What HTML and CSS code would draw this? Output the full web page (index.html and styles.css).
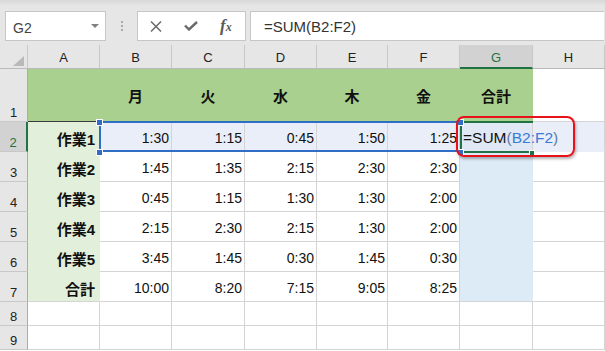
FILE: index.html
```html
<!DOCTYPE html>
<html>
<head>
    <title>合計 - SUM</title>
    <link rel="stylesheet" href="styles.css">
</head>
<body>
    <div class="toolbar">
        <div class="namebox"><span>G2</span><span class="caret"></span></div>
        <div class="grip"><i></i><i></i><i></i></div>
        <div class="tools">
            <svg width="12" height="11" viewBox="0 0 12 11"><path d="M1 0.5L11 10.5M11 0.5L1 10.5" stroke="#6a6a6a" stroke-width="1.5" fill="none"/></svg>
            <svg width="14" height="10" viewBox="0 0 14 10"><path d="M1 4.5L5 8.5L13 1" stroke="#6a6a6a" stroke-width="2.4" fill="none"/></svg>
            <span class="fx">f<small>x</small></span>
        </div>
        <div class="formula">=SUM(B2:F2)</div>
    </div>

    <div class="sheet">
        <!-- column headers -->
        <div class="ch corner"><svg width="11" height="10" viewBox="0 0 11 10"><path d="M11 0V10H0Z" fill="#b9b9b9"/></svg></div>
        <div class="ch">A</div>
        <div class="ch">B</div>
        <div class="ch">C</div>
        <div class="ch">D</div>
        <div class="ch">E</div>
        <div class="ch">F</div>
        <div class="ch on">G</div>
        <div class="ch">H</div>

        <!-- row 1 -->
        <div class="rh">1</div>
        <div class="c g a1"></div>
        <div class="c g">月</div>
        <div class="c g">火</div>
        <div class="c g">水</div>
        <div class="c g">木</div>
        <div class="c g">金</div>
        <div class="c g">合計</div>
        <div class="c"></div>

        <!-- row 2 -->
        <div class="rh on">2</div>
        <div class="c lg">作業1</div>
        <div class="c band">1:30</div>
        <div class="c band">1:15</div>
        <div class="c band">0:45</div>
        <div class="c band">1:50</div>
        <div class="c band">1:25</div>
        <div class="c band edit">=SUM<span class="paren">(</span><span class="ref">B2:F2</span><span class="paren">)</span><span class="caret-line"></span></div>
        <div class="c band"></div>

        <!-- row 3 -->
        <div class="rh">3</div>
        <div class="c lg">作業2</div>
        <div class="c">1:45</div>
        <div class="c">1:35</div>
        <div class="c">2:15</div>
        <div class="c">2:30</div>
        <div class="c">2:30</div>
        <div class="c lb"></div>
        <div class="c"></div>

        <!-- row 4 -->
        <div class="rh">4</div>
        <div class="c lg">作業3</div>
        <div class="c">0:45</div>
        <div class="c">1:15</div>
        <div class="c">1:30</div>
        <div class="c">1:30</div>
        <div class="c">2:00</div>
        <div class="c lb"></div>
        <div class="c"></div>

        <!-- row 5 -->
        <div class="rh">5</div>
        <div class="c lg">作業4</div>
        <div class="c">2:15</div>
        <div class="c">2:30</div>
        <div class="c">2:15</div>
        <div class="c">1:30</div>
        <div class="c">2:00</div>
        <div class="c lb"></div>
        <div class="c"></div>

        <!-- row 6 -->
        <div class="rh">6</div>
        <div class="c lg">作業5</div>
        <div class="c">3:45</div>
        <div class="c">1:45</div>
        <div class="c">0:30</div>
        <div class="c">1:45</div>
        <div class="c">0:30</div>
        <div class="c lb"></div>
        <div class="c"></div>

        <!-- row 7 -->
        <div class="rh">7</div>
        <div class="c lg last">合計</div>
        <div class="c">10:00</div>
        <div class="c">8:20</div>
        <div class="c">7:15</div>
        <div class="c">9:05</div>
        <div class="c">8:25</div>
        <div class="c lb last"></div>
        <div class="c"></div>

        <!-- row 8 -->
        <div class="rh">8</div>
        <div class="c"></div><div class="c"></div><div class="c"></div><div class="c"></div>
        <div class="c"></div><div class="c"></div><div class="c"></div><div class="c"></div>

        <!-- row 9 -->
        <div class="rh">9</div>
        <div class="c"></div><div class="c"></div><div class="c"></div><div class="c"></div>
        <div class="c"></div><div class="c"></div><div class="c"></div><div class="c"></div>

        <!-- selection overlays -->
        <div class="range"></div>
        <div class="active"></div>
        <div class="handle h1"></div>
        <div class="handle h2"></div>
        <div class="handle h3"></div>
        <div class="handle h4"></div>
        <div class="fill"></div>
        <div class="callout"></div>
    </div>
</body>
</html>
```

FILE: styles.css
```css
body {
    margin: 0;
    width: 605px;
    height: 351px;
    overflow: hidden;
    background-color: #ffffff;
    font-family: "Liberation Sans", "Noto Sans CJK JP", sans-serif;
}

/* formula bar */
.toolbar {
    display: flex;
    align-items: flex-start;
    height: 45px;
    box-sizing: border-box;
    padding: 11px 0 0 5px;
    background: linear-gradient(#d8d8d8, #e6e6e6 6px);
}

.namebox {
    width: 101px;
    height: 30px;
    box-sizing: border-box;
    border: 1px solid #c6c6c6;
    background-color: #ffffff;
    display: flex;
    align-items: center;
    justify-content: space-between;
    padding: 4px 6px 0 7px;
    font-size: 14px;
    color: #444444;
}

.caret {
    width: 0;
    height: 0;
    border-left: 4px solid transparent;
    border-right: 4px solid transparent;
    border-top: 4px solid #808080;
    margin-top: -4px;
}

.grip {
    display: flex;
    flex-direction: column;
    gap: 2px;
    margin: 10px 0 0 15px;
}

.grip i {
    display: block;
    width: 2px;
    height: 2px;
    background-color: #a9a9a9;
}

.tools {
    width: 109px;
    height: 30px;
    box-sizing: border-box;
    margin-left: 14px;
    border: 1px solid #c6c6c6;
    background-color: #ffffff;
    display: flex;
    align-items: center;
    gap: 22px;
    padding-left: 12px;
}

.fx {
    font-family: "Liberation Serif", serif;
    font-style: italic;
    font-weight: bold;
    font-size: 17px;
    color: #5a5a5a;
    margin-top: -1px;
}

.fx small {
    font-size: 12px;
}

.formula {
    flex: 1;
    height: 30px;
    box-sizing: border-box;
    margin: 0 1px 0 4px;
    border: 1px solid #c6c6c6;
    border-right: none;
    background-color: #ffffff;
    display: flex;
    align-items: center;
    padding-left: 13px;
    font-size: 15px;
    color: #333333;
}

/* grid */
.sheet {
    position: relative;
    display: grid;
    grid-template-columns: 28px 72px 72px 73px 72px 71px 72px 73px 72px;
    grid-template-rows: 24px 53px repeat(6, 30px) 24px 24px;
}

.sheet > div {
    box-sizing: border-box;
}

.ch {
    background-color: #e6e6e6;
    border-right: 1px solid #c8c8c8;
    border-bottom: 1px solid #b9b9b9;
    display: flex;
    justify-content: center;
    align-items: flex-end;
    padding-bottom: 3px;
    font-size: 13px;
    color: #222222;
}

.ch.corner {
    justify-content: flex-end;
    padding: 0 3px 2px 0;
}

.ch.on {
    background-color: #d2d2d2;
    color: #217346;
    border-bottom: 2px solid #217346;
    padding-bottom: 2px;
}

.rh {
    background-color: #e6e6e6;
    border-right: 1px solid #ababab;
    border-bottom: 1px solid #c8c8c8;
    display: flex;
    justify-content: center;
    align-items: flex-end;
    padding-bottom: 1px;
    font-size: 13px;
    color: #222222;
}

.rh.on {
    background-color: #d2d2d2;
    color: #217346;
    border-right: 2px solid #217346;
}

.c {
    border-right: 1px solid #d4d4d4;
    border-bottom: 1px solid #d4d4d4;
    display: flex;
    align-items: center;
    justify-content: flex-end;
    padding: 3px 2px 0 0;
    font-size: 14px;
    color: #111111;
    white-space: nowrap;
    overflow: hidden;
}

/* row 1 : weekdays */
.c.g {
    background-color: #a9d08e;
    border-color: #a9d08e;
    justify-content: center;
    padding: 0;
    font-size: 15px;
    font-weight: bold;
}

.c.a1 {
    border-bottom-color: #3a3a3a;
}

/* column A : task names */
.c.lg {
    background-color: #e2efda;
    border-color: #e2efda;
    padding-right: 4px;
    font-size: 15px;
    font-weight: bold;
}

/* column G : totals */
.c.lb {
    background-color: #ddebf7;
    border-color: #ddebf7;
}

.c.last {
    border-bottom-color: #d4d4d4;
}

.c.band {
    background-color: #e9eef8;
    border-bottom-color: #e9eef8;
}

/* G2 in edit mode, text runs over H2 */
.c.edit {
    position: relative;
    z-index: 1;
    background-color: #dfe8f4;
    justify-content: flex-start;
    padding-left: 3px;
    font-size: 15.5px;
    overflow: visible;
}

.paren {
    color: #5f7ca8;
}

.ref {
    color: #3a7bd5;
}

.caret-line {
    display: inline-block;
    width: 1px;
    height: 16px;
    margin: -2px 0 0 2px;
    background-color: #000000;
}

/* selection overlays */
.range {
    position: absolute;
    z-index: 2;
    left: 99px;
    top: 76px;
    width: 363px;
    height: 31px;
    border: 2px solid #2f6dc6;
    border-right: none;
}

.active {
    position: absolute;
    z-index: 2;
    left: 460px;
    top: 76px;
    width: 73px;
    height: 32px;
    border-top: 2px solid #217346;
    border-left: 2px solid #217346;
    border-bottom: 2px solid #217346;
}

.handle {
    position: absolute;
    z-index: 3;
    width: 7px;
    height: 7px;
    box-sizing: border-box;
    background-color: #2f6dc6;
    border: 1px solid #ffffff;
}

.h1 { left: 96px; top: 74px; }
.h2 { left: 96px; top: 104px; }
.h3 { left: 457px; top: 74px; }
.h4 { left: 457px; top: 104px; }

.fill {
    position: absolute;
    z-index: 3;
    left: 529px;
    top: 105px;
    width: 6px;
    height: 5px;
    background-color: #217346;
    border: 1px solid #ffffff;
    border-bottom: none;
}

.callout {
    position: absolute;
    z-index: 4;
    left: 456px;
    top: 71px;
    width: 119px;
    height: 41px;
    box-sizing: border-box;
    border: 2px solid #e8121b;
    border-radius: 8px;
    box-shadow: 1px 2px 3px rgba(0, 0, 0, 0.3);
}
```
